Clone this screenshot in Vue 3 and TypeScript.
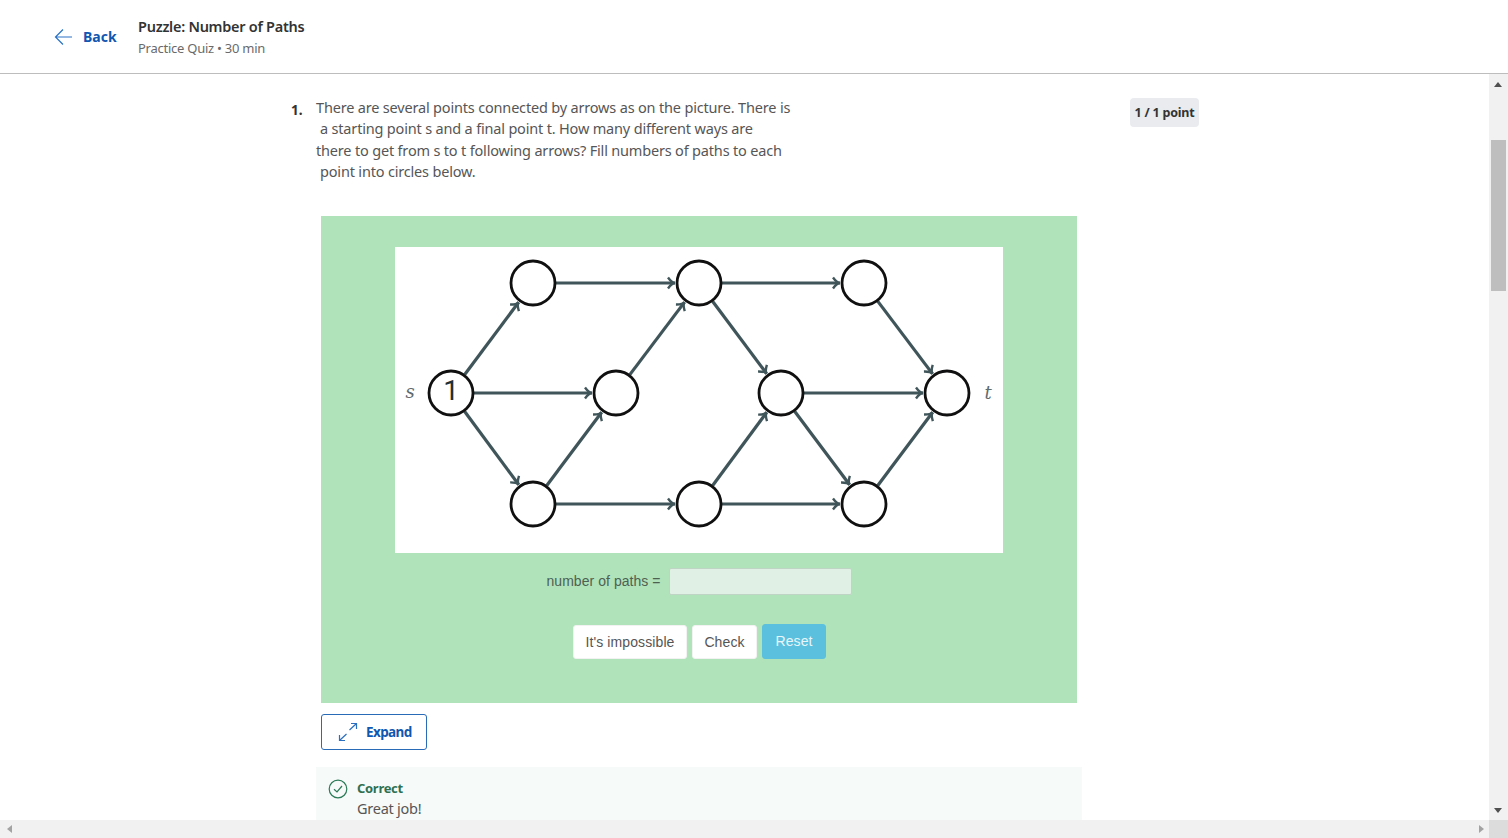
<script setup lang="ts">
type P = [number, number]
const nodes: P[] = [
  [56, 146], [138, 36], [304, 36], [469, 36], [221, 146],
  [386, 146], [552, 146], [138, 257], [304, 257], [469, 257],
]
const links: P[] = [
  [0, 1], [0, 4], [0, 7], [1, 2], [2, 3], [4, 2], [7, 4], [7, 8],
  [8, 9], [2, 5], [8, 5], [5, 6], [5, 9], [3, 6], [9, 6],
]
const R = 23
const edges = links.map(([a, b]) => {
  const [x1, y1] = nodes[a]
  const [x2, y2] = nodes[b]
  const len = Math.hypot(x2 - x1, y2 - y1)
  const ux = (x2 - x1) / len
  const uy = (y2 - y1) / len
  const sx = x1 + ux * R
  const sy = y1 + uy * R
  const ex = x2 - ux * (R + 1)
  const ey = y2 - uy * (R + 1)
  const back = 7
  const side = 5.5
  const hx = ex - ux * back
  const hy = ey - uy * back
  const head = `M${hx - uy * side} ${hy + ux * side}Q${ex - ux * 3} ${ey - uy * 3} ${ex} ${ey}Q${ex - ux * 3} ${ey - uy * 3} ${hx + uy * side} ${hy - ux * side}`
  return { line: `M${sx} ${sy}L${ex} ${ey}`, head }
})
</script>

<template>
  <div class="page">
    <header class="top">
      <a class="back">
        <svg class="back-icon" width="20" height="20" viewBox="0 0 20 20" fill="none">
          <path d="M18 10H2M9 2.5 1.5 10 9 17.5" />
        </svg>
        <span>Back</span>
      </a>
      <div class="titles">
        <div class="title">Puzzle: Number of Paths</div>
        <div class="sub">Practice Quiz • 30 min</div>
      </div>
    </header>
    <div class="middle">
      <main class="content">
        <div class="question">
          <div class="num">1.</div>
          <div class="body">
            <p class="prompt">
              <span>There are several points connected by arrows as on the picture. There is</span>
              <span class="ind">a starting point s and a final point t. How many different ways are</span>
              <span>there to get from s to t following arrows? Fill numbers of paths to each</span>
              <span class="ind">point into circles below.</span>
            </p>
            <section class="widget">
              <svg class="graph" width="608" height="306" viewBox="0 0 608 306">
                <g class="edges">
                  <g v-for="(e, i) in edges" :key="i">
                    <path :d="e.line" />
                    <path class="head" :d="e.head" />
                  </g>
                </g>
                <circle v-for="(n, i) in nodes" :key="i" class="node" :cx="n[0]" :cy="n[1]" r="22" />
                <text class="one" x="56" y="153">1</text>
                <text class="var" x="15" y="151">s</text>
                <text class="var" x="593" y="152">t</text>
              </svg>
              <div class="answer">
                <label>number of paths =</label>
                <div class="field"></div>
              </div>
              <div class="buttons">
                <button class="btn wide">It's impossible</button>
                <button class="btn mid">Check</button>
                <button class="btn reset">Reset</button>
              </div>
            </section>
            <button class="expand">
              <svg width="20" height="20" viewBox="0 0 20 20" fill="none">
                <path d="M11.5 8 18.5 1.5M13 1.5h5.5V7M8.5 12 1.5 18.5M1.5 13v5.5H7" />
              </svg>
              <span>Expand</span>
            </button>
            <div class="feedback">
              <svg class="check" width="20" height="20" viewBox="0 0 20 20" fill="none">
                <circle cx="10" cy="10" r="8.8" />
                <path d="M6 10.2 9 13l5-6" />
              </svg>
              <div>
                <div class="correct">Correct</div>
                <div class="great">Great job!</div>
              </div>
            </div>
          </div>
          <div class="grade">1 / 1 point</div>
        </div>
      </main>
      <div class="vbar">
        <span class="arrow up"></span>
        <div class="thumb"></div>
        <span class="arrow down"></span>
      </div>
    </div>
    <div class="hbar">
      <span class="arrow left"></span>
      <span class="arrow right"></span>
      <div class="corner"></div>
    </div>
  </div>
</template>

<style>
html, body { margin: 0; overflow: hidden; background: #fff; }
</style>

<style scoped>
.page {
  width: 1508px;
  height: 838px;
  display: flex;
  flex-direction: column;
  overflow: hidden;
  font-family: "Noto Sans", "Open Sans", sans-serif;
  color: #1f1f1f;
}
.top {
  height: 74px;
  flex: none;
  box-sizing: border-box;
  border-bottom: 1px solid #bdbdbd;
  display: flex;
  align-items: center;
  padding-left: 54px;
}
.back {
  display: flex;
  align-items: center;
  gap: 9px;
  color: #0f57b0;
  font-size: 14px;
  font-weight: 700;
  width: 84px;
}
.back-icon path { stroke: #2a73c5; stroke-width: 1.2; }
.titles { display: flex; flex-direction: column; gap: 3px; margin-top: 0; }
.title { font-size: 14.5px; font-weight: 600; line-height: 20px; letter-spacing: -0.27px; color: #333; }
.sub { font-size: 13px; line-height: 18px; letter-spacing: -0.25px; color: #6a6a6a; }
.middle { flex: 1; min-height: 0; display: flex; }
.content { flex: 1; min-width: 0; overflow: hidden; }
.question {
  display: flex;
  align-items: flex-start;
  padding: 23px 0 0 291px;
}
.num { width: 25px; font-size: 13.5px; font-weight: 700; line-height: 22px; margin-top: 2px; color: #333; }
.body { width: 767px; flex: none; }
.prompt {
  margin: 0;
  display: flex;
  flex-direction: column;
  font-size: 14.5px;
  line-height: 21.4px;
  letter-spacing: -0.18px;
  color: #565656;
}
.ind { padding-left: 4px; }
.widget {
  width: 756px;
  height: 487px;
  margin: 33px 0 0 5px;
  background: #b1e3bb;
  box-sizing: border-box;
  padding-top: 31px;
  display: flex;
  flex-direction: column;
  align-items: center;
}
.graph { background: #fff; flex: none; display: block; }
.edges path { stroke: #3f5559; stroke-width: 3.2; fill: none; }
.edges .head { stroke-width: 2.4; }
.node { fill: #fff; stroke: #101010; stroke-width: 2.8; }
.one { font-family: Roboto, sans-serif; font-weight: 400; font-size: 28px; fill: #1f2f33; text-anchor: middle; }
.var { font-family: "DejaVu Serif", serif; font-style: italic; font-size: 18px; fill: #5f6b6d; text-anchor: middle; }
.answer {
  display: flex;
  align-items: center;
  gap: 8px;
  margin-top: 15px;
  font-family: "Liberation Sans", sans-serif;
  font-size: 14px;
  letter-spacing: 0.05px;
  color: #4d6153;
}
.field {
  width: 183px;
  height: 27px;
  box-sizing: border-box;
  background: #e0f0e4;
  border: 1px solid #bfd4c4;
  border-radius: 2px;
}
.buttons { display: flex; gap: 5px; margin: 30px 0 0 1px; }
.btn {
  height: 34px;
  padding: 0;
  margin: 0;
  background: #fff;
  border: 1px solid #f2f2f2;
  border-radius: 3px;
  font-family: "Liberation Sans", sans-serif;
  font-size: 14px;
  letter-spacing: 0.1px;
  color: #555;
}
.wide { width: 114px; }
.mid { width: 65px; }
.reset { background: #5bc0de; border-color: #5bc0de; color: #e8f6fa; height: 35px; margin-top: -1px; width: 64px; padding: 0; }
.expand {
  display: flex;
  align-items: center;
  gap: 8px;
  margin: 11px 0 0 5px;
  width: 106px;
  height: 36px;
  padding: 0 0 0 16px;
  background: #fff;
  border: 1px solid #2a6bb8;
  border-radius: 3px;
  font-family: "Noto Sans", sans-serif;
  font-size: 13.5px;
  font-weight: 700;
  letter-spacing: -0.6px;
  color: #0f57b0;
}
.expand svg path { stroke: #2a6fc0; stroke-width: 1.2; }
.feedback {
  display: flex;
  gap: 9px;
  margin-top: 17px;
  width: 766px;
  height: 60px;
  box-sizing: border-box;
  padding: 12px 0 0 12px;
  background: #f6faf8;
}
.check { flex: none; margin-top: 0; }
.check circle, .check path { stroke: #2a7a57; stroke-width: 1.2; }
.correct { font-size: 13px; font-weight: 700; line-height: 18px; letter-spacing: -0.3px; color: #2f7052; }
.great { font-size: 14.5px; line-height: 23px; letter-spacing: -0.25px; color: #565656; }
.grade {
  margin-left: 47px;
  width: 69px;
  height: 29px;
  margin-top: 1px;
  flex: none;
  background: #e9ebee;
  border-radius: 4px;
  font-size: 12.5px;
  font-weight: 700;
  line-height: 29px;
  text-align: center;
  letter-spacing: -0.22px;
  color: #333;
}
.vbar {
  width: 19px;
  flex: none;
  background: #f1f1f1;
  position: relative;
}
.thumb {
  position: absolute;
  top: 66px;
  left: 2px;
  width: 15px;
  height: 151px;
  background: #bebebe;
}
.hbar {
  height: 18px;
  flex: none;
  background: #f1f1f1;
  position: relative;
}
.corner { position: absolute; right: 0; top: 0; width: 19px; height: 18px; background: #dcdcdc; }
.arrow { position: absolute; width: 0; height: 0; border-style: solid; border-color: transparent; }
.up { top: 8px; left: 5px; border-width: 0 4.5px 5px; border-bottom-color: #505050; }
.down { bottom: 7px; left: 5px; border-width: 5px 4.5px 0; border-top-color: #505050; }
.left { left: 7px; top: 5px; border-width: 4.5px 5px 4.5px 0; border-right-color: #a3a3a3; }
.right { right: 24px; top: 5px; border-width: 4.5px 0 4.5px 5px; border-left-color: #a3a3a3; }
</style>
